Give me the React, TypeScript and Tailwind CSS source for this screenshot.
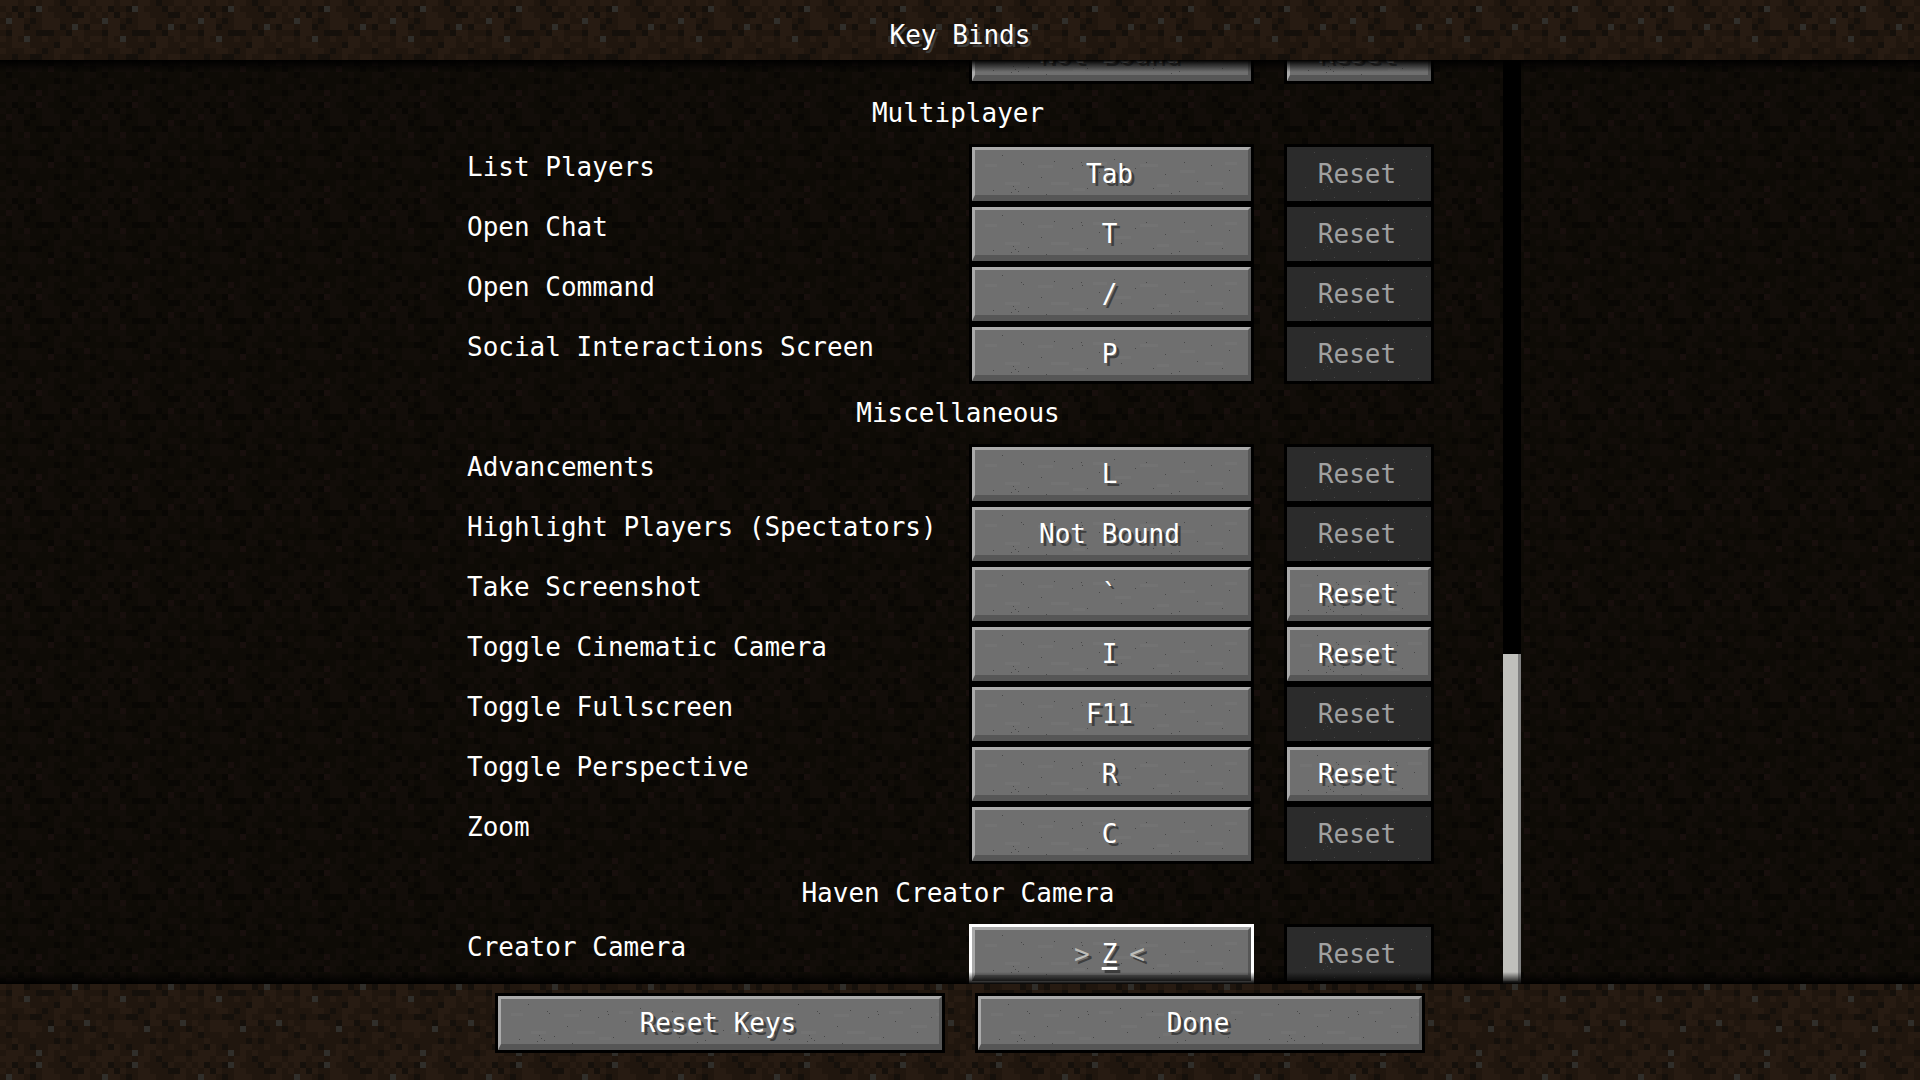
import { useId } from "react";
import type { ReactNode } from "react";

// 16x16 soil tile: d = dark clod, l = light clod, g = pebble, . = base soil
const SOIL = [
  "lll.ll.ll.d..ll.",
  ".ld..dgl...dl..l",
  "l.ldl..ll...ddl.",
  ".gll.d.lll...ll.",
  "l.lld..llld.g.dl",
  ".dll..ddd..dll..",
  "l.l.g..l..ll.l.l",
  "..lll....dll..l.",
  "l...ll.d.ll...d.",
  "..d..dd..l..ll..",
  "l..lll..dlld..g.",
  ".l.llll.g...d..d",
  ".d...l....l...ll",
  "..l......d.d..l.",
  "l.dl.d..ll..l...",
  ".lll..g.l.l....d",
];

const SPECKS: [number, number][] = [
  [18, 40], [23, 53], [27, 5], [29, 52], [36, 42], [38, 36], [40, 39], [43, 41], [46, 12],
  [47, 50], [48, 14], [53, 37], [66, 27], [71, 44], [79, 11], [83, 45], [97, 18], [101, 53],
  [106, 12], [107, 15], [112, 38], [124, 22], [131, 51], [139, 9], [146, 33], [152, 47],
  [160, 18], [167, 52], [171, 12], [178, 38], [185, 53], [190, 24], [196, 43], [204, 41],
  [209, 12], [214, 50], [222, 31], [228, 46], [236, 15], [241, 53], [247, 38], [254, 20],
];

const PATCHES: [number, number, number][] = [
  [10, 14, 12], [30, 32, 15], [63, 15, 15], [76, 32, 18], [98, 38, 12], [118, 12, 14],
  [140, 26, 16], [165, 14, 18], [182, 34, 12], [205, 20, 15], [230, 32, 18], [250, 12, 12],
];

const FILLS: Record<"bright" | "deep", Record<string, string>> = {
  bright: { ".": "#20160e", d: "#15100b", l: "#271b12", g: "#302e2a" },
  deep: { ".": "#0e0b06", d: "#090704", l: "#120d09", g: "#180f0d" },
};

function Soil({ tone, shift = 0 }: { tone: "bright" | "deep"; shift?: number }) {
  const id = useId();
  return (
    <svg className="pointer-events-none absolute inset-0 h-full w-full" aria-hidden="true" shapeRendering="crispEdges">
      <defs>
        <pattern id={id} width="96" height="96" y={shift} patternUnits="userSpaceOnUse">
          <rect width="96" height="96" fill={FILLS[tone]["."]} />
          {SOIL.flatMap((row, y) =>
            row.split("").map((c, x) =>
              c === "." ? null : (
                <rect key={`${x}-${y}`} x={x * 6} y={y * 6} width="6" height="6" fill={FILLS[tone][c]} />
              ),
            ),
          )}
        </pattern>
      </defs>
      <rect width="100%" height="100%" fill={`url(#${id})`} />
    </svg>
  );
}

function Stone({ dark }: { dark: boolean }) {
  const id = useId();
  return (
    <svg className="pointer-events-none absolute inset-0 h-full w-full" aria-hidden="true" shapeRendering="crispEdges">
      <defs>
        <pattern id={id} width="270" height="60" patternUnits="userSpaceOnUse">
          {!dark && PATCHES.map(([x, y, w]) => <rect key={`${x}-${y}`} x={x} y={y} width={w} height="3" fill="#737373" />)}
          {SPECKS.map(([x, y]) => (
            <rect key={`${x}-${y}`} x={x} y={y} width="1" height="1" fill={dark ? "#474747" : "#484848"} />
          ))}
        </pattern>
      </defs>
      <rect width="100%" height="100%" fill={`url(#${id})`} />
    </svg>
  );
}

type StoneButtonProps = {
  children: ReactNode;
  label?: string;
  disabled?: boolean;
  selected?: boolean;
};

function StoneButton({ children, label, disabled = false, selected = false }: StoneButtonProps) {
  const frame = selected ? "border-white" : "border-black";
  const face = disabled
    ? "bg-[#2b2b2b] text-[#a0a0a0]"
    : "bg-[#6f6f6f] text-white [text-shadow:3px_3px_0_#3e3e3e]";
  const bevel = disabled ? "" : "border-t-3 border-r-3 border-b-6 border-l-3 border-t-[#aaaaaa] border-r-[#565656] border-b-[#565656] border-l-[#aaaaaa]";
  return (
    <button type="button" aria-label={label} disabled={disabled} className={`h-[60px] w-full border-3 ${frame}`}>
      <span className={`relative flex h-full w-full justify-center pr-1 ${face} ${bevel}`}>
        <Stone dark={disabled} />
        <span className={`relative leading-8 whitespace-pre ${disabled ? "pt-[11px]" : "pt-[8px]"}`}>{children}</span>
      </span>
    </button>
  );
}

type Bind = { name: string; key: string; changed?: boolean; listening?: boolean };
type Category = { title: string; binds: Bind[] };

const CATEGORIES: Category[] = [
  {
    title: "Multiplayer",
    binds: [
      { name: "List Players", key: "Tab" },
      { name: "Open Chat", key: "T" },
      { name: "Open Command", key: "/" },
      { name: "Social Interactions Screen", key: "P" },
    ],
  },
  {
    title: "Miscellaneous",
    binds: [
      { name: "Advancements", key: "L" },
      { name: "Highlight Players (Spectators)", key: "Not Bound" },
      { name: "Take Screenshot", key: "`", changed: true },
      { name: "Toggle Cinematic Camera", key: "I", changed: true },
      { name: "Toggle Fullscreen", key: "F11" },
      { name: "Toggle Perspective", key: "R", changed: true },
      { name: "Zoom", key: "C" },
    ],
  },
  {
    title: "Haven Creator Camera",
    binds: [{ name: "Creator Camera", key: "Z", listening: true }],
  },
];

function BindRow({ bind }: { bind: Bind }) {
  return (
    <li className="grid h-[60px] shrink-0 grid-cols-[1fr_285px_150px] gap-x-[30px] pr-[69px] pl-[68px]">
      <span className="pt-[7px] leading-8 whitespace-nowrap">{bind.name}</span>
      <StoneButton label={bind.name ? `${bind.name}: ${bind.key}` : undefined} selected={bind.listening}>
        {bind.listening ? (
          <span className="flex gap-3">
            <span className="text-[#bdbdb8]">&gt;</span>
            <span className="underline decoration-3 underline-offset-4">{bind.key}</span>
            <span className="text-[#bdbdb8]">&lt;</span>
          </span>
        ) : (
          bind.key
        )}
      </StoneButton>
      <StoneButton label={bind.name ? `Reset ${bind.name}` : undefined} disabled={!bind.changed}>
        Reset
      </StoneButton>
    </li>
  );
}

export default function App() {
  return (
    <div className="flex h-screen flex-col overflow-hidden bg-black font-['DejaVu_Sans_Mono',monospace] text-[26px] text-white">
      <header className="relative h-[60px] shrink-0 text-center">
        <Soil tone="bright" />
        <h1 className="relative pt-[19px] leading-8 [text-shadow:3px_3px_0_#3e3e3e]">Key Binds</h1>
      </header>

      <main className="relative min-h-0 flex-1 overflow-hidden">
        <Soil tone="deep" shift={36} />
        <div className="relative mx-auto flex h-full w-[1122px]">
          <ul className="flex flex-1 flex-col justify-end overflow-hidden">
            <BindRow bind={{ name: "", key: "Not Bound", changed: true }} />
            {CATEGORIES.map((category) => (
              <li key={category.title} className="shrink-0">
                <h2 className="h-[60px] pt-[13px] pl-[14px] text-center leading-8">{category.title}</h2>
                <ul>
                  {category.binds.map((bind) => (
                    <BindRow key={bind.name} bind={bind} />
                  ))}
                </ul>
              </li>
            ))}
          </ul>
          <div className="flex w-[18px] flex-col justify-end bg-black">
            <div className="h-[330px] border-r-3 border-b-3 border-[#808080] bg-[#c0c0bc]" />
          </div>
        </div>
        <div className="pointer-events-none absolute inset-x-0 top-0 h-3 bg-linear-to-b from-black to-transparent" />
        <div className="pointer-events-none absolute inset-x-0 bottom-0 h-3 bg-linear-to-t from-black to-transparent" />
      </main>

      <footer className="relative h-24 shrink-0">
        <Soil tone="bright" shift={-24} />
        <div className="relative mx-auto grid w-[930px] grid-cols-2 gap-[30px] pt-[9px]">
          <StoneButton>Reset Keys</StoneButton>
          <StoneButton>Done</StoneButton>
        </div>
      </footer>
    </div>
  );
}
